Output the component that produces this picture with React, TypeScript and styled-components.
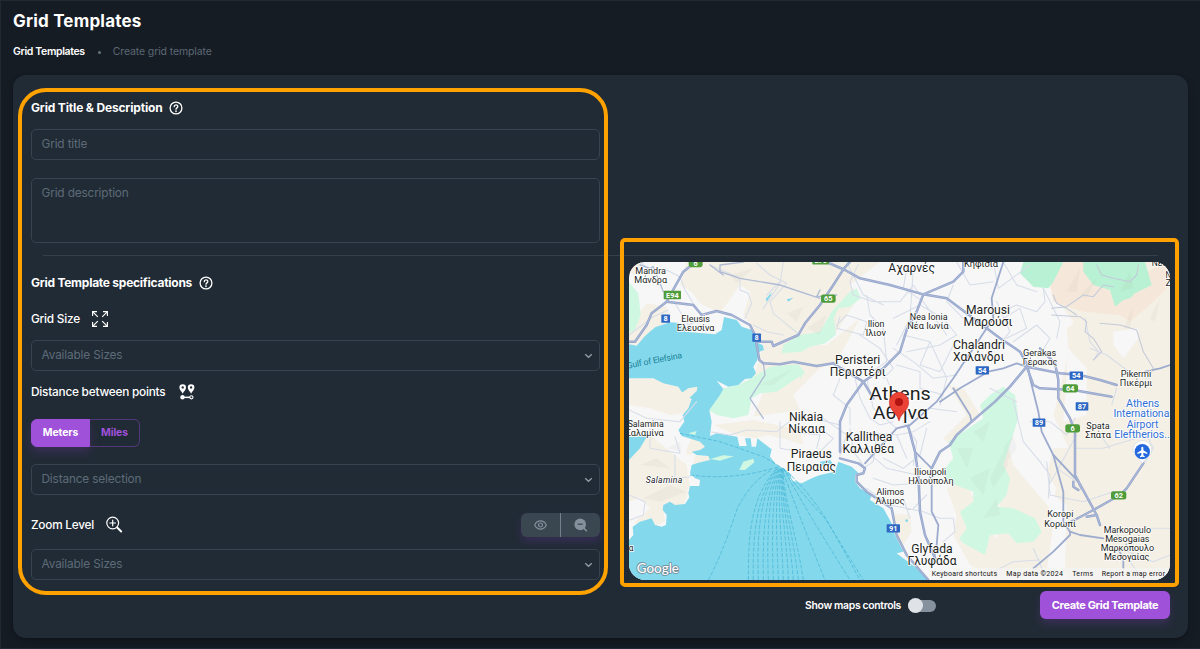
import React from "react";
import styled, { createGlobalStyle } from "styled-components";

const GlobalStyle = createGlobalStyle`
  * { box-sizing: border-box; }
  body {
    margin: 0;
    background: #161c24;
    color: #fff;
    font-family: Inter, "Noto Sans", "Liberation Sans", sans-serif;
  }
`;

const Page = styled.main`
  height: 649px;
  padding: 10px 12px 10px 12px;
  border: 1px solid #222932;
  border-right: 0;
  overflow: hidden;
`;

const PageTitle = styled.h1`
  margin: 0;
  height: 21px;
  font-size: 17px;
  line-height: 21px;
  font-weight: 700;
  letter-spacing: 0.2px;
`;

const Breadcrumbs = styled.nav`
  display: flex;
  align-items: center;
  height: 16px;
  margin-top: 12px;
  font-size: 10.5px;
  line-height: 16px;
`;

const Crumb = styled.span<{ $active?: boolean }>`
  color: ${(p) => (p.$active ? "#fff" : "#5b6875")};
  font-weight: ${(p) => (p.$active ? 600 : 400)};
  letter-spacing: ${(p) => (p.$active ? "-0.36px" : "-0.12px")};
`;

const Dot = styled.i`
  width: 3px;
  height: 3px;
  margin: 0 12px 0 13px;
  border-radius: 50%;
  background: #637381;
`;

const Card = styled.section`
  position: relative;
  height: 563px;
  margin-top: 15px;
  padding: 23px 18px 0;
  border-radius: 13px;
  background: #212b35;
  box-shadow: 0 0 2px rgba(0, 0, 0, 0.3), 0 6px 12px -3px rgba(0, 0, 0, 0.3);
`;

const FormColumn = styled.div`
  width: 569px;
`;

const Heading = styled.h2<{ $spacing?: number; $gap?: number }>`
  display: flex;
  align-items: center;
  gap: ${(p) => p.$gap ?? 7}px;
  height: 18px;
  margin: 0;
  font-size: 12px;
  font-weight: 700;
  letter-spacing: ${(p) => p.$spacing ?? -0.16}px;
  white-space: nowrap;
  svg { position: relative; top: 1px; }
`;

const FieldLabel = styled.div<{ $top: number; $gap?: number }>`
  display: flex;
  align-items: center;
  gap: ${(p) => p.$gap ?? 12}px;
  height: 20px;
  margin-top: ${(p) => p.$top}px;
  font-size: 11.8px;
  font-weight: 500;
  letter-spacing: -0.22px;
  white-space: nowrap;
`;

const Field = styled.div<{ $top: number; $height?: number }>`
  display: flex;
  align-items: flex-start;
  justify-content: space-between;
  height: ${(p) => p.$height ?? 31}px;
  margin-top: ${(p) => p.$top}px;
  padding: 6px 6px 0 9.5px;
  border: 1px solid #36444f;
  border-radius: 5px;
  color: #5d6b78;
  font-size: 11.8px;
  line-height: 17px;
  letter-spacing: -0.14px;
`;

const Divider = styled.hr`
  height: 1px;
  margin: 12px 12px 0;
  border: 0;
  background: #34404a;
`;

const Specs = styled.div`
  display: flex;
  justify-content: space-between;
`;

const SpecsForm = styled(FormColumn)`
  padding-top: 17px;
`;

const UnitSwitch = styled.div`
  display: flex;
  width: 109px;
  height: 28px;
  margin-top: 17px;
  border-radius: 6px;
`;

const Unit = styled.button<{ $selected?: boolean }>`
  width: ${(p) => (p.$selected ? 59 : 50)}px;
  padding: 0 0 1px;
  border: 1px solid ${(p) => (p.$selected ? "#9f51da" : "#523876")};
  border-left-width: ${(p) => (p.$selected ? 1 : 0)}px;
  border-radius: ${(p) => (p.$selected ? "6px 0 0 6px" : "0 6px 6px 0")};
  background: ${(p) => (p.$selected ? "#9f51da" : "transparent")};
  box-shadow: ${(p) => (p.$selected ? "0 5px 10px rgba(130, 60, 190, 0.25)" : "none")};
  color: ${(p) => (p.$selected ? "#fff" : "#9f51da")};
  font: 700 10.5px Inter, sans-serif;
  letter-spacing: -0.15px;
`;

const ZoomRow = styled.div`
  display: flex;
  align-items: center;
  justify-content: space-between;
  height: 24px;
  margin-top: 18px;
`;

const ZoomButtons = styled.div`
  display: flex;
  width: 79px;
  height: 24px;
  border-radius: 6px;
  background: #3a4650;
  box-shadow: 0 5px 9px rgba(120, 50, 180, 0.25);
`;

const ZoomButton = styled.button`
  display: flex;
  flex: 1;
  align-items: center;
  justify-content: center;
  padding: 0;
  border: 0;
  background: none;
  color: #84909b;
  & + & { border-left: 1px solid #74808b; }
`;

const MapColumn = styled.div`
  width: 541px;
  padding-top: 6px;
`;

const MapSvg = styled.svg`
  display: block;
  width: 541px;
  height: 318px;
  border-radius: 16px;
`;

const MapFooter = styled.div`
  display: flex;
  align-items: center;
  justify-content: flex-end;
  height: 28px;
  margin-top: 11px;
`;

const ToggleLabel = styled.span`
  font-size: 10.4px;
  font-weight: 600;
  letter-spacing: -0.33px;
`;

const Toggle = styled.span`
  display: flex;
  align-items: center;
  width: 28px;
  height: 12px;
  margin: 1px 104px 0 7px;
  border-radius: 6px;
  background: #85919d;
`;

const Knob = styled.i`
  width: 15px;
  height: 15px;
  flex: none;
  border-radius: 50%;
  background: #dfe3e8;
`;

const CreateButton = styled.button`
  width: 130px;
  height: 28px;
  padding: 0 0 1px;
  border: 0;
  border-radius: 6px;
  background: #9f51da;
  box-shadow: 0 5px 9px rgba(130, 60, 190, 0.25);
  color: #fff;
  font: 700 11px Inter, sans-serif;
  letter-spacing: -0.36px;
`;

/* Highlight outlines that sit over the card contents. */
const FormHighlight = styled.div`
  position: absolute;
  top: 13px;
  left: 5px;
  width: 590px;
  height: 507px;
  border: 4px solid #ffa200;
  border-radius: 28px;
  pointer-events: none;
`;

const MapHighlight = styled(FormHighlight)`
  top: 163px;
  left: 607px;
  width: 559px;
  height: 349px;
  border-radius: 5px;
`;

const HelpIcon = () => (
  <svg width="14" height="14" viewBox="0 0 14 14" fill="none" stroke="#fff" strokeWidth="1.3" strokeLinecap="round">
    <circle cx="7" cy="7" r="5.9" />
    <path d="M5.2 5.7C5.2 3.3 8.8 3.3 8.8 5.6C8.8 6.9 7 6.8 7 8.2" />
    <circle cx="7" cy="10.2" r=".3" />
  </svg>
);

const ExpandIcon = () => (
  <svg width="16" height="16" viewBox="0 0 16 16" fill="none" stroke="#fff" strokeWidth="1.15">
    <path d="M.6 5V.6H5M11 .6h4.4V5M15.4 11v4.4H11M5 15.4H.6V11M.6.6l5.2 5.2M15.4.6l-5.2 5.2M15.4 15.4l-5.2-5.2M.6 15.4l5.2-5.2" />
  </svg>
);

const PointsIcon = () => (
  <svg width="16" height="16" viewBox="0 0 16 16" fill="#fff">
    <path fillRule="evenodd" d="M3.7.2A3.3 3.3 0 0 1 7 3.5C7 6 4.7 7.3 3.7 9.7C2.7 7.3.4 6 .4 3.5A3.3 3.3 0 0 1 3.7.2ZM3.7 2.2a1.2 1.2 0 1 0 0 2.4a1.2 1.2 0 0 0 0-2.4Z" />
    <path fillRule="evenodd" d="M12.1.2a3.3 3.3 0 0 1 3.3 3.3C15.4 6 13.1 7.3 12.1 9.7C11.1 7.3 8.8 6 8.8 3.5A3.3 3.3 0 0 1 12.1.2ZM12.1 2.2a1.2 1.2 0 1 0 0 2.4a1.2 1.2 0 0 0 0-2.4Z" />
    <circle cx="3.5" cy="13.3" r="2.2" />
    <path d="M3 12.6h8v1.5H3z" />
    <circle cx="12.4" cy="13.3" r="1.6" fill="none" stroke="#fff" strokeWidth="1.1" />
  </svg>
);

const MagnifierIcon = () => (
  <svg width="17" height="17" viewBox="0 0 17 17" fill="none" stroke="#fff" strokeWidth="1.2" strokeLinecap="round">
    <circle cx="6.7" cy="7" r="5.9" />
    <path d="M3.9 7H9.5M6.7 4.2v5.6" />
    <path d="m11.2 11.5 4 4" strokeWidth="1.9" />
  </svg>
);

const EyeIcon = () => (
  <svg width="13" height="10" viewBox="0 0 13 10" fill="none" stroke="currentColor" strokeWidth="1.2">
    <path d="M.7 5C3.2-.5 9.8-.5 12.3 5C9.8 10.5 3.2 10.5.7 5Z" />
    <circle cx="6.5" cy="5" r="2" />
  </svg>
);

const ZoomOutIcon = () => (
  <svg width="14" height="14" viewBox="0 0 14 14">
    <circle cx="6.2" cy="6.4" r="5.8" fill="currentColor" />
    <path d="m10 10.4 2.4 2.4" stroke="currentColor" strokeWidth="1.6" strokeLinecap="round" />
    <path d="M3.6 6.2h5.2" stroke="#3a4650" strokeWidth="1.2" />
  </svg>
);

const Chevron = () => (
  <svg width="9" height="6" viewBox="0 0 9 6" fill="none" stroke="#929da8" strokeWidth="1.3" style={{ marginTop: 6 }}>
    <path d="M1.2 1.2 4.5 4.3 7.8 1.2" />
  </svg>
);

const MapText = styled.text`
  font-family: Roboto, "Noto Sans", sans-serif;
  text-anchor: middle;
  paint-order: stroke;
  stroke: #fff;
  stroke-width: 4.5px;
  stroke-linejoin: round;
`;

type Place = [text: string, x: number, y: number, width: number, size: number];

const places: Place[] = [
  ["Mandra", 92, 118, 92, 28],
  ["Μάνδρα", 92, 145, 98, 28],
  ["Eleusis", 227, 262, 86, 28],
  ["Ελευσίνα", 227, 288, 113, 28],
  ["Αχαρνές", 875, 110, 140, 37],
  ["Κηφισιά", 1083, 96, 102, 28],
  ["Ilion", 768, 275, 50, 28],
  ["Ίλιον", 767, 302, 62, 28],
  ["Nea Ionia", 926, 256, 113, 28],
  ["Νέα Ιωνία", 924, 283, 124, 28],
  ["Marousi", 1104, 237, 132, 37],
  ["Μαρούσι", 1104, 273, 147, 37],
  ["Chalandri", 1077, 342, 156, 37],
  ["Χαλάνδρι", 1076, 378, 154, 37],
  ["Peristeri", 713, 387, 136, 37],
  ["Περιστέρι", 713, 422, 168, 37],
  ["Athens", 840, 496, 184, 57],
  ["Αθήνα", 841, 553, 166, 57],
  ["Nikaia", 558, 557, 102, 37],
  ["Νίκαια", 560, 593, 111, 37],
  ["Kallithea", 747, 618, 140, 37],
  ["Καλλιθέα", 745, 655, 155, 37],
  ["Piraeus", 574, 670, 123, 37],
  ["Πειραιάς", 574, 707, 148, 37],
  ["Salamina", 77, 575, 108, 28],
  ["Σαλαμίνα", 74, 602, 114, 28],
  ["α", 33, 947, 14, 28],
  ["Ilioupoli", 931, 720, 96, 28],
  ["Ηλιούπολη", 933, 747, 136, 28],
  ["Alimos", 811, 781, 83, 28],
  ["Άλιμος", 810, 808, 87, 28],
  ["Glyfada", 936, 955, 124, 37],
  ["Γλυφάδα", 936, 991, 147, 37],
  ["Gerakas", 1259, 362, 100, 28],
  ["Γέρακας", 1260, 389, 103, 28],
  ["Pikermi", 1548, 425, 92, 28],
  ["Πικέρμι", 1548, 452, 98, 28],
  ["Spata", 1434, 583, 70, 28],
  ["Σπάτα", 1434, 610, 77, 28],
  ["Koropi", 1321, 847, 78, 28],
  ["Κορωπί", 1320, 875, 95, 28],
  ["Markopoulo", 1522, 895, 142, 28],
  ["Mesogaias", 1522, 922, 133, 28],
  ["Μαρκόπουλο", 1522, 948, 160, 28],
  ["Μεσογαίας", 1520, 975, 136, 28],
  ["Νέα", 1618, 93, 46, 27],
  ["Ν", 1645, 129, 17, 25],
  ["Ζ", 1645, 152, 17, 25],
];

const airport: Place[] = [
  ["Athens", 1568, 516, 100, 30],
  ["International", 1568, 547, 175, 30],
  ["Airport", 1568, 579, 95, 30],
  ["Eleftherios..", 1566, 609, 167, 30],
];

const credits: Place[] = [
  ["Keyboard shortcuts", 1033, 1023, 196, 21],
  ["Map data ©2024", 1244, 1023, 170, 21],
  ["Terms", 1388, 1023, 63, 21],
  ["Report a map error", 1540, 1023, 190, 21],
];

type Shield = [text: string, x: number, y: number, width: number, color: string];
const green = "#4f9c3b";
const blue = "#2c67c4";

const shields: Shield[] = [
  ["E94", 157, 180, 52, green],
  ["6", 227, 84, 42, green],
  ["8", 137, 251, 26, blue],
  ["8", 410, 308, 26, blue],
  ["E75", 602, 76, 50, green],
  ["65", 625, 191, 44, green],
  ["54", 1087, 406, 40, blue],
  ["54", 1369, 422, 40, blue],
  ["64", 1351, 460, 46, green],
  ["87", 1386, 514, 38, blue],
  ["89", 1257, 563, 38, blue],
  ["6", 1358, 580, 44, green],
  ["62", 1496, 781, 46, green],
  ["91", 820, 880, 40, blue],
];

const beige = [
  "M200 81H780L690 150L720 180L650 290L600 330H430L400 280L370 240L392 170L360 150L300 235L240 205L215 170L180 150Z",
  "M27 81H60L70 100L40 120L27 110Z",
  "M27 270L80 205L140 215L150 260L100 280L50 330H27Z",
  "M27 430L100 430L175 455L190 478L215 492L200 535L150 540L90 520L27 510Z",
  "M430 330H620L720 250L650 380L600 400L520 480L540 525L400 545L430 470L400 430Z",
  "M27 620L90 600L200 690L210 760L130 830L60 790L27 800Z",
  "M200 640L270 600L255 650L200 660Z",
  "M60 790L120 745L205 770L190 810L130 825L135 860L110 870L40 865L90 820Z",
  "M215 610L260 612L250 640L200 640ZM225 660L275 665L268 680L220 690Z",
  "M280 570L400 555L540 585L550 630L490 610L435 600L410 610L350 600Z",
  "M1290 150L1340 81H1650V1035H1350L1290 960L1320 930L1285 870L1270 760L1300 640L1345 640L1300 540L1340 380L1360 260L1300 180Z",
  "M985 450L1035 465L1080 540L1020 590L1000 640L970 610L1040 540Z",
  "M980 760L1035 740L1120 900L1170 960L1130 1035L1050 990L1000 900L1010 840Z",
  "M815 835L870 840L875 890L850 930L830 915Z",
  "M1160 600L1290 750L1310 1010L1140 1035L1130 900Z",
  "M1340 280L1395 245L1425 290L1405 380L1350 390Z",
];

const sand = [
  "M1325 81L1440 81L1500 150L1640 81L1650 150L1600 200L1530 260L1500 240L1390 230L1300 200L1290 150Z",
];

const parks = [
  "M27 142L55 175L62 240L45 285L27 292Z",
  "M540 300L600 290L635 230L690 170L710 160L722 190L690 215L655 220L642 250L648 300L615 325L570 335L545 350L485 355L490 330Z",
  "M265 525L310 460L355 450L395 430L450 395L535 388L555 415L515 440L470 470L420 475L395 490L385 540L340 550L290 540Z",
  "M540 395L553 412L540 432Z",
  "M1110 480L1150 455L1185 480L1195 550L1150 690L1170 730L1160 780L1130 815L1180 820L1245 850L1265 890L1240 920L1190 925L1165 895L1110 900L1095 960L1030 925L1018 910L1040 880L1020 830L1060 800L1060 770L980 740L975 700L1000 670L985 620L1030 590L1090 550L1080 510Z",
];

const forests = [
  "M1210 81H1330L1300 140L1285 160L1240 155L1200 115Z",
  "M1390 81H1575L1595 150L1545 175L1530 190L1510 195L1485 215L1470 165L1420 150L1390 110Z",
];

const minorRoads = [
  "M60 81L95 110L140 105L180 125L195 165L235 230M165 205L205 270L240 255M27 300L100 245L145 225",
  "M270 90L360 130L360 165L385 175L395 205L375 250M410 85L450 120L500 145L450 200L460 235L490 260L540 300M400 270L440 290L490 300M490 81L480 145L430 220",
  "M440 180L480 140M27 780L75 800L70 840L30 855M90 580L90 640L180 655L165 605M165 660L165 730L210 725M27 525L80 550L180 560L230 500",
  "M270 590L330 600L380 585L470 590L520 550L600 555L660 570M480 560L480 640L540 650M510 590L600 600L590 640",
  "M715 88L690 140L700 180L760 200L840 200L880 150L900 180M680 81L730 180L790 210M880 100L870 250L830 330",
  "M650 270L680 240L740 260L730 300L650 280L660 245M740 180L750 240L790 280L800 380L740 420M720 300L780 340L820 400L790 430",
  "M660 430L640 480L690 520L690 570M700 410L720 490L750 550L780 570L820 560M740 430L760 520L830 580",
  "M800 430L820 480L810 530L870 540M820 250L900 210L970 250L1010 300L960 330L860 350M860 100L850 160L910 200L980 300",
  "M850 300L930 320L980 430L960 510M930 320L900 390L960 410L1000 330M820 340L880 380L940 430L1010 420M830 390L900 410L900 460L970 480",
  "M1000 150L980 200L1030 250L1070 220L1120 230M1010 81L1050 150L1120 140M1120 81L1135 160L1230 90M1150 81L1190 150L1250 170",
  "M1120 240L1190 210L1250 230L1275 200L1270 160M1160 310L1220 280L1200 220L1150 250M1180 320L1250 270L1290 310L1260 360M1130 200L1170 290L1130 340",
  "M1270 160L1300 220L1320 260L1310 310M1395 250L1410 320L1435 350L1425 370",
  "M600 580L640 610L600 650M610 550L680 600L660 660M690 580L700 650L730 690M720 590L830 600L860 670M730 640L800 700L890 720",
  "M770 600L760 680L730 700M790 670L850 700L900 660L920 580M830 600L880 590L930 560M850 560L890 620L880 690M870 540L930 520L1010 530",
  "M760 730L820 750L900 745L900 830M740 760L810 810L910 830L960 850L1000 850L1005 890L970 920M850 790L870 850M920 780L880 820",
  "M1180 500L1210 620L1260 680L1290 720L1285 790M1230 560L1290 560L1340 600L1365 550M1110 460L1190 500",
  "M1290 745L1370 600M1310 700L1370 740M1370 640L1450 640L1580 600L1600 640L1570 690M1440 600L1470 640",
  "M1280 680L1290 780L1390 800L1480 770M1120 1010L1180 980L1260 975M1500 940L1600 980L1650 960M1590 880L1650 880M1470 870L1500 910M1530 980L1570 1035M1240 940L1270 1010",
  "M1490 460L1475 510M1410 340L1460 360L1540 420L1590 430",
];

const ridgeRoads = [
  "M1295 220L1340 215L1390 180L1420 185L1450 150L1480 155M1430 90L1445 120L1480 130L1530 140L1550 120L1555 90",
  "M1295 240L1380 245L1400 260L1395 290L1420 310L1445 350L1420 375M1440 265L1500 270L1550 285L1570 350L1600 400L1590 420",
  "M1300 180L1310 205L1340 220L1370 240",
];

const mediumRoads = [
  "M370 81L300 90L300 110L360 130L480 150L600 190M270 90L310 120M600 165L590 185L650 180",
  "M390 490L435 420L430 385M390 490L430 550",
  "M60 90L90 100L100 95L130 170",
];

const highways = [
  "M27 320H45L80 270L95 235L140 200L190 110L215 90",
  "M140 200L220 210L245 240L290 228L335 240L390 270L405 300L418 375L430 385L480 388L520 380L590 393L640 385L655 395L730 440L760 490",
  "M410 320L455 320L460 333L535 300L555 265L600 210L640 150L672 100L690 81",
  "M620 81L675 105L720 130L810 150L910 178L980 190L1060 250L1140 310L1200 350L1225 395",
  "M1030 81L1030 110L1000 140L910 178L890 230L860 285L840 350L790 400L730 440L680 510L660 560L660 650",
  "M660 670L715 685L735 700L730 715L710 720L710 740L740 770L815 820L830 900L860 960L925 1035",
  "M1125 500L1055 560L1010 600L990 630L960 650L935 700L930 730M1125 500L1170 455L1220 395",
  "M1220 395L1240 450L1260 460L1360 465L1475 485M1220 395L1320 415L1380 420L1440 435L1490 450",
  "M1260 340L1305 385L1315 435L1315 490L1350 550L1365 590L1365 720L1430 840L1440 870M1375 740L1385 760",
  "M1335 870L1420 825L1500 780L1520 760L1570 685M1360 740L1360 755L1375 765M1430 840L1400 845",
  "M865 575L885 650L895 720L900 830L915 900L950 980",
];

const arterials = [
  "M1150 81L1115 190L1120 250L1060 340L1000 430L950 500L870 570L830 580L735 685",
  "M1220 395L1190 385L1150 400L1105 410L1020 460L960 500M1000 460L1050 540L1055 560",
  "M885 650L935 700L935 830L955 870L950 930L940 980",
  "M1225 400L1230 430L1255 530L1265 590L1300 660L1375 740",
  "M1300 660L1330 770L1330 860L1350 890L1350 900L1300 950L1240 1000M1350 890L1380 900L1450 910",
  "M1575 410L1620 400L1650 390M1490 935L1510 970L1510 1000",
];

const ferryRoutes = [
  "M180 595L300 620L430 665L480 695M210 720Q330 735 440 705L480 695",
  "M265 1035Q310 950 350 825Q390 740 455 705",
  "M385 1035C385 900 390 790 470 700",
  "M400 1035C397 900 410 780 472 700",
  "M415 1035C410 900 420 780 474 700",
  "M430 1035C427 900 435 780 476 700",
  "M445 1035C440 900 445 780 478 700",
  "M460 1035C455 900 455 780 480 700",
  "M475 1035C470 900 463 780 482 700",
  "M490 1035C485 900 470 780 484 700",
  "M505 1035C500 900 475 780 486 700",
  "M520 1035C510 900 480 780 487 700",
  "M535 1035C520 900 484 780 488 700",
  "M550 1035C530 900 488 780 489 700",
  "M485 700Q540 850 615 1035M490 700Q560 830 690 1035M490 700Q540 770 615 850L730 1035M490 700Q580 780 640 890L720 1035",
];

const Label = ({ item: [text, x, y, width, size], fill = "#1c1e22" }: { item: Place; fill?: string }) => (
  <MapText x={x} y={y} fontSize={size} fill={fill} textLength={width} lengthAdjust="spacingAndGlyphs">
    {text}
  </MapText>
);

const AthensMap = () => (
  <MapSvg viewBox="27 81 1623 954" preserveAspectRatio="none">
    <rect x="27" y="81" width="1623" height="954" fill="#f7f7f8" />
    <g fill="#f5f0e5">{beige.map((d) => <path key={d} d={d} />)}</g>
    <g fill="#f5e8da">{sand.map((d) => <path key={d} d={d} />)}</g>
    <g fill="#f7f7f8">
      <path d="M1480 290L1555 280L1555 310L1510 370L1480 330ZM1345 340L1400 400L1400 540L1330 560ZM1150 590L1200 600L1310 760L1290 820L1180 690ZM1270 760L1340 810L1335 1000L1280 1010L1300 870Z" />
    </g>
    <g fill="#d0f7e2">{parks.map((d) => <path key={d} d={d} />)}</g>
    <g fill="#b8f1d3">{forests.map((d) => <path key={d} d={d} />)}</g>
    <g fill="#8a8370" opacity=".06">
      <path d="M1340 170L1380 100L1370 170ZM1380 180L1430 130L1400 190ZM1500 170L1530 110L1540 160ZM1510 280L1540 215L1530 280ZM1590 250L1620 190L1605 260Z" />
      <path d="M1150 640L1180 600L1190 640L1160 680ZM1110 730L1150 650L1165 690L1120 760ZM1060 590L1110 560L1090 620ZM1010 640L1060 640L1040 700ZM1050 730L1110 700L1090 780ZM1090 850L1130 790L1140 840Z" />
      <path d="M70 790L150 750L200 770L120 800ZM60 690L110 670L150 700ZM140 640L180 620L185 650ZM560 280L620 240L600 300ZM420 450L520 400L460 450ZM330 120L400 100L350 145ZM500 235L550 215L530 260Z" />
    </g>
    <g fill="#84d8ec">
      <path d="M27 328L50 332L75 303L105 277L150 262L180 264L195 290L285 298L305 285L312 246L350 255L365 275L398 286L408 322L428 330L432 345L418 350L412 375L400 395L408 415L395 430L375 432L355 450L325 455L290 437L310 462L300 480L268 525L275 560L270 603L290 595L352 605L358 633L380 633L375 610L392 610L395 635L408 635L412 610L435 628L455 643L450 665L470 690L490 700L515 720L510 735L545 745L575 730L600 720L645 710L655 680L695 695L715 713L705 720L705 740L720 760L755 780L750 795L790 820L815 865L825 900L850 950L830 955L850 970L890 1000L923 1035H27V915L40 900L38 875L60 860L95 850L105 870L125 875L138 870L140 840L128 825L130 810L150 800L165 810L195 807L208 787L205 775L210 753L238 753L240 735L225 730L210 715L215 690L235 683L270 675L265 663L230 660L215 650L240 645L255 635L240 620L185 603L175 585L193 560L188 540L205 520L215 492L190 478L175 455L130 445L100 430L27 430Z" />
      <path d="M27 605L82 603L60 640L27 675ZM437 192L455 172L452 182L440 200ZM500 193L520 188L505 200ZM600 680L630 675L640 688L600 694Z" />
      <circle cx="860" cy="857" r="4" />
    </g>
    <path d="M175 480L205 460L232 455L230 468L205 492L190 495Z" fill="#f5f0e5" />
    <g fill="#d0f7e2"><path d="M270 672L310 661L342 664L300 677ZM358 704L370 680L400 671L403 682L375 705ZM205 595L230 588L225 600Z" /></g>
    <g fill="none" stroke="#4fbbd8" strokeWidth="2.6" strokeDasharray="12 5">
      {ferryRoutes.map((d) => <path key={d} d={d} />)}
    </g>
    <g fill="none" strokeLinejoin="round" strokeLinecap="round">
      <g stroke="#d7dde8" strokeWidth="3.2">{minorRoads.map((d) => <path key={d} d={d} />)}</g>
      <g stroke="#c3cad9" strokeWidth="3.2">{ridgeRoads.map((d) => <path key={d} d={d} />)}</g>
      <g stroke="#b0bbd4" strokeWidth="4">{mediumRoads.map((d) => <path key={d} d={d} />)}</g>
      <g stroke="#9dacce" strokeWidth="5.5">{arterials.map((d) => <path key={d} d={d} />)}</g>
      <g stroke="#94a4ca" strokeWidth="7.5">{highways.map((d) => <path key={d} d={d} />)}</g>
      <g stroke="#abb8d8" strokeWidth="3.2">{highways.map((d) => <path key={d} d={d} />)}</g>
    </g>
    {shields.map(([text, x, y, width, color]) => (
      <g key={`${text}-${x}`}>
        <rect x={x - width / 2} y={y - 12.5} width={width} height="25" rx={color === green && text.length < 3 ? 7 : 2} fill={color} />
        <text x={x} y={y + 7.5} fill="#fff" fontSize="22" fontWeight="700" fontFamily="Roboto, sans-serif" textAnchor="middle">{text}</text>
      </g>
    ))}
    {places.map((item) => <Label key={`${item[0]}-${item[2]}`} item={item} />)}
    {airport.map((item) => <Label key={item[0]} item={item} fill="#2f6fd6" />)}
    <MapText x="132" y="745" fontSize="26" fontStyle="italic" fill="#202227" textLength="110">Salamina</MapText>
    <text x="22" y="401" fontSize="26" fontFamily="Roboto, sans-serif" fill="#188297" textLength="168" transform="rotate(-11 22 401)">Gulf of Elefsina</text>
    <g>
      <path d="M1567 685L1552 668A28 28 0 1 1 1582 668Z" fill="#fff" stroke="#c5cbd3" strokeWidth="1.5" />
      <circle cx="1567" cy="650" r="23" fill="#2368dd" />
      <path d="M1564 638a3 3 0 0 1 6 0v8l12 7v4l-12-4v8l4 3v3l-7-2-7 2v-3l4-3v-8l-12 4v-4l12-7Z" fill="#fff" />
    </g>
    <g>
      <path d="M837 558C833 535 808 528 808 501A29 29 0 0 1 866 501C866 528 841 535 837 558Z" fill="#ea4335" stroke="#cf2d24" strokeWidth="2" />
      <circle cx="837" cy="501" r="12" fill="#b31412" />
    </g>
    <rect x="927" y="999" width="723" height="36" fill="#f5f5f5" opacity=".6" />
    {credits.map(([text, x, y, width, size]) => (
      <text key={text} x={x} y={y} fontSize={size} fill="#111" fontFamily="Roboto, sans-serif" textAnchor="middle" textLength={width}>{text}</text>
    ))}
    <text x="50" y="1015" fontSize="42" fontWeight="500" fontFamily="Lato, sans-serif" fill="#fff" stroke="#718996" strokeWidth="5" strokeLinejoin="round" paintOrder="stroke" textLength="127" lengthAdjust="spacingAndGlyphs">Google</text>
  </MapSvg>
);

const Select = ({ top, children }: { top: number; children: React.ReactNode }) => (
  <Field $top={top}>
    {children}
    <Chevron />
  </Field>
);

export default function App() {
  return (
    <>
      <GlobalStyle />
      <Page>
        <PageTitle>Grid Templates</PageTitle>
        <Breadcrumbs>
          <Crumb $active>Grid Templates</Crumb>
          <Dot />
          <Crumb>Create grid template</Crumb>
        </Breadcrumbs>
        <Card>
          <FormColumn>
            <Heading $gap={6}>Grid Title &amp; Description <HelpIcon /></Heading>
            <Field $top={13}>Grid title</Field>
            <Field $top={18} $height={65}>Grid description</Field>
          </FormColumn>
          <Divider />
          <Specs>
            <SpecsForm>
              <Heading $spacing={-0.25}>Grid Template specifications <HelpIcon /></Heading>
              <FieldLabel $top={18}>Grid Size <ExpandIcon /></FieldLabel>
              <Select top={11}>Available Sizes</Select>
              <FieldLabel $top={11} $gap={14}>Distance between points <PointsIcon /></FieldLabel>
              <UnitSwitch>
                <Unit $selected>Meters</Unit>
                <Unit>Miles</Unit>
              </UnitSwitch>
              <Select top={17}>Distance selection</Select>
              <ZoomRow>
                <FieldLabel $top={-1}>Zoom Level <MagnifierIcon /></FieldLabel>
                <ZoomButtons>
                  <ZoomButton><EyeIcon /></ZoomButton>
                  <ZoomButton><ZoomOutIcon /></ZoomButton>
                </ZoomButtons>
              </ZoomRow>
              <Select top={12}>Available Sizes</Select>
            </SpecsForm>
            <MapColumn>
              <AthensMap />
              <MapFooter>
                <ToggleLabel>Show maps controls</ToggleLabel>
                <Toggle><Knob /></Toggle>
                <CreateButton>Create Grid Template</CreateButton>
              </MapFooter>
            </MapColumn>
          </Specs>
          <FormHighlight />
          <MapHighlight />
        </Card>
      </Page>
    </>
  );
}
